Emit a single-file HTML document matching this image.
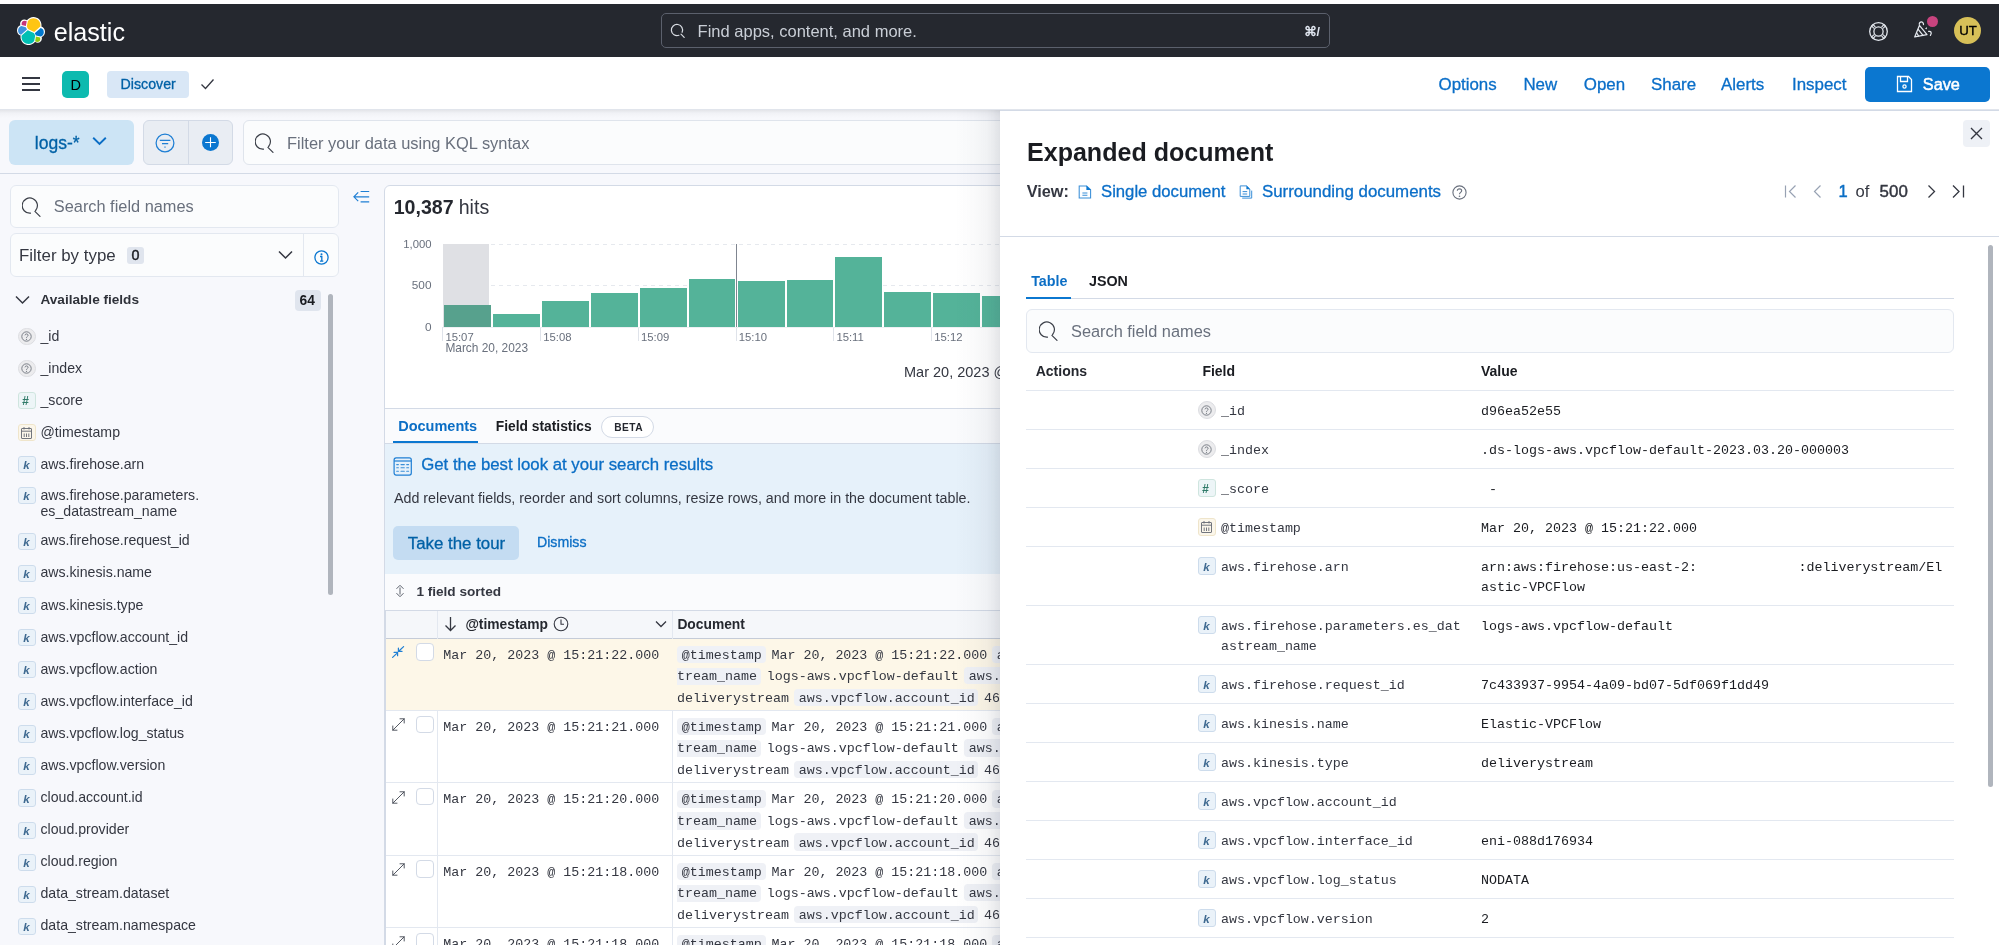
<!DOCTYPE html><html><head><meta charset="utf-8"><style>
*{box-sizing:border-box}
html,body{margin:0;padding:0}
body{width:1999px;height:945px;overflow:hidden;position:relative;background:#f7f8fc;font-family:"Liberation Sans", sans-serif;will-change:transform}
.t{position:absolute;line-height:1;white-space:nowrap;font-family:"Liberation Sans", sans-serif}
.t.m{font-family:"Liberation Mono", monospace}
.r{position:absolute}
.bl{display:inline-block;width:0;height:0;vertical-align:baseline}
</style></head><body>
<div class="r" style="left:0.00px;top:0.00px;width:1999.00px;height:4.00px;background:#fff"></div>
<div class="r" style="left:0.00px;top:4.00px;width:1999.00px;height:53.00px;background:#25282f"></div>
<svg class="r" style="left:17.30px;top:16.80px;" width="28" height="28" viewBox="0 0 32 32">
<path fill="#FFF" d="M32 16.842c0-2.677-1.663-5.029-4.164-5.939.109-.565.162-1.12.162-1.698C27.998 4.14 23.882.024 18.823.024c-2.962 0-5.72 1.414-7.442 3.803-.848-.658-1.891-1.018-2.973-1.018-2.685 0-4.874 2.18-4.874 4.874 0 .588.098 1.16.293 1.697C1.31 10.266 0 12.643 0 15.329c0 2.684 1.66 5.037 4.17 5.936a9.385 9.385 0 0 0-.164 1.698c0 5.055 4.107 9.170 9.162 9.170 2.970 0 5.720-1.420 7.434-3.810.857.670 1.900 1.037 2.970 1.037 2.686 0 4.873-2.180 4.873-4.874 0-.595-.097-1.168-.292-1.697 2.498-.910 3.847-3.287 3.847-5.947"/>
<path fill="#FEC514" d="M12.583 13.852l7.003 3.193 7.066-6.190a7.890 7.890 0 0 0 .153-1.555c0-4.364-3.550-7.914-7.914-7.914-2.611 0-5.046 1.287-6.526 3.447l-1.175 6.093 1.393 2.926z"/>
<path fill="#00BFB3" d="M5.336 21.264c-.101.508-.153 1.048-.153 1.575 0 4.378 3.562 7.940 7.940 7.940 2.633 0 5.082-1.300 6.557-3.480l1.166-6.075-1.556-2.975-7.030-3.204-6.924 6.219z"/>
<path fill="#C8357A" d="M5.290 9.218l4.799 1.133L11.140 4.900a3.646 3.646 0 0 0-2.200-.730 3.697 3.697 0 0 0-3.693 3.694c0 .480.093.944.245 1.354"/>
<path fill="#3E91DC" d="M4.874 10.361c-2.146.710-3.636 2.767-3.636 5.027 0 2.200 1.360 4.163 3.406 4.940l6.733-6.086-1.236-2.642-5.267-1.239z"/>
<path fill="#93C90E" d="M20.758 27.797a3.577 3.577 0 0 0 2.193.739 3.697 3.697 0 0 0 3.693-3.693c0-.480-.093-.946-.246-1.355l-4.796-1.123-.844 5.432z"/>
<path fill="#0077CC" d="M21.731 21.148l5.280 1.234c2.149-.708 3.637-2.758 3.637-5.026a5.205 5.205 0 0 0-3.500-4.924l-6.906 6.050 1.489 2.666z"/>
</svg>
<div id="t1" class="t" style="left:53.80px;top:19.61px;font-size:25.1px;color:#ffffff;">elastic</div>
<div class="r" style="left:661.00px;top:13.00px;width:669.00px;height:35.00px;border:1px solid #5b606c;border-radius:5px;background:#25282f"></div>
<svg class="r" style="left:669.50px;top:23.00px;" width="16" height="16" viewBox="0 0 16 16"><g fill="none" stroke="#d9dde3" stroke-width="1.2" stroke-linecap="round"><path d="M8.9 12.3 A5.6 5.6 0 1 1 12.1 9.3"/><path d="M11 11.2 L14.2 14.4"/></g></svg>
<div id="t2" class="t" style="left:697.60px;top:22.80px;font-size:16.5px;color:#c9ced6;">Find apps, content, and more.</div>
<div id="t3" class="t" style="left:1303.50px;top:26.01px;font-size:12.5px;color:#dfe5ef;font-weight:700;">&#8984;/</div>
<svg class="r" style="left:1868.00px;top:20.50px;" width="21" height="21" viewBox="0 0 21 21"><g fill="none" stroke="#e4e8ee" stroke-width="1.3"><circle cx="10.5" cy="10.5" r="8.8"/><circle cx="10.5" cy="10.5" r="4.6"/><path d="M4.6 3.2 L7.4 6 M3.2 4.6 L6 7.4 M16.4 3.2 L13.6 6 M17.8 4.6 L15 7.4 M4.6 17.8 L7.4 15 M3.2 16.4 L6 13.6 M16.4 17.8 L13.6 15 M17.8 16.4 L15 13.6" stroke-width="1.1"/></g></svg>
<svg class="r" style="left:1912.00px;top:20.00px;" width="22" height="22" viewBox="0 0 22 22"><g fill="none" stroke="#e4e8ee" stroke-width="1.25" stroke-linejoin="round" stroke-linecap="round"><path d="M2.7 16.9 L7.4 5.4 L15 14.6 Z"/><path d="M6.4 9.6 L11 15.4 M4.9 13.2 L6.6 16"/><path d="M7.3 4.3 C7.1 1.2 11.6 1.0 11.5 4.6"/><path d="M16.6 11.4 C18.8 10.8 20.2 12.6 18.4 15.4"/></g><path d="M13 8.8 L14.8 7 L14.9 9.2 Z" fill="#e4e8ee"/></svg>
<div class="r" style="left:1926.80px;top:16.20px;width:11.00px;height:11.00px;background:#c8447f;border-radius:50%"></div>
<div class="r" style="left:1954.00px;top:17.00px;width:27.30px;height:27.30px;background:#d7c058;border-radius:50%"></div>
<div id="t4" class="t" style="left:1959.20px;top:23.91px;font-size:13.2px;color:#000;-webkit-text-stroke:0.35px #000">UT</div>
<div class="r" style="left:0.00px;top:57.00px;width:1999.00px;height:53.00px;background:#fff;border-bottom:1px solid #e1e5ec"></div>
<div class="r" style="left:22.00px;top:76.80px;width:18.00px;height:2.40px;background:#343741"></div>
<div class="r" style="left:22.00px;top:82.80px;width:18.00px;height:2.40px;background:#343741"></div>
<div class="r" style="left:22.00px;top:88.80px;width:18.00px;height:2.40px;background:#343741"></div>
<div class="r" style="left:62.00px;top:71.00px;width:27.00px;height:27.00px;background:#0dbaaf;border-radius:5px"></div>
<div id="t5" class="t" style="left:70.60px;top:77.50px;font-size:14.5px;color:#000;">D</div>
<div class="r" style="left:107.00px;top:71.00px;width:82.00px;height:26.50px;background:#d9e7f6;border-radius:4px"></div>
<div id="t6" class="t" style="left:120.60px;top:76.91px;font-size:14.2px;color:#0061a6;-webkit-text-stroke:0.3px currentColor">Discover</div>
<svg class="r" style="left:200.00px;top:77.00px;" width="15" height="14" viewBox="0 0 15 14"><path d="M1.5 7.5 L5.5 11.5 L13.5 2.5" fill="none" stroke="#343741" stroke-width="1.3"/></svg>
<div id="t7" class="t" style="left:1438.50px;top:77.10px;font-size:16.9px;color:#0a6ec8;-webkit-text-stroke:0.3px currentColor">Options</div>
<div id="t8" class="t" style="left:1523.40px;top:77.10px;font-size:16.9px;color:#0a6ec8;-webkit-text-stroke:0.3px currentColor">New</div>
<div id="t9" class="t" style="left:1583.80px;top:77.10px;font-size:16.9px;color:#0a6ec8;-webkit-text-stroke:0.3px currentColor">Open</div>
<div id="t10" class="t" style="left:1651.00px;top:77.10px;font-size:16.9px;color:#0a6ec8;-webkit-text-stroke:0.3px currentColor">Share</div>
<div id="t11" class="t" style="left:1721.00px;top:77.10px;font-size:16.9px;color:#0a6ec8;-webkit-text-stroke:0.3px currentColor">Alerts</div>
<div id="t12" class="t" style="left:1792.00px;top:77.10px;font-size:16.9px;color:#0a6ec8;-webkit-text-stroke:0.3px currentColor">Inspect</div>
<div class="r" style="left:1865.00px;top:66.50px;width:125.00px;height:35.50px;background:#0b77d0;border-radius:5px"></div>
<svg class="r" style="left:1896.00px;top:75.00px;" width="17" height="18" viewBox="0 0 17 18"><g fill="none" stroke="#fff" stroke-width="1.3"><path d="M1.5 1.5 H12.5 L15.5 4.5 V16.5 H1.5 Z"/><path d="M4.5 1.5 V6.5 H11.5 V1.5"/><circle cx="8.5" cy="11.5" r="1.6"/></g></svg>
<div id="t13" class="t" style="left:1922.80px;top:76.30px;font-size:16.3px;color:#fff;-webkit-text-stroke:0.5px currentColor">Save</div>
<div class="r" style="left:0.00px;top:110.00px;width:1999.00px;height:64.00px;background:#f7f8fc;border-bottom:1px solid #d3dae6"></div>
<div class="r" style="left:0.00px;top:110.00px;width:1999.00px;height:8.00px;background:linear-gradient(180deg,rgba(52,55,65,0.10),rgba(52,55,65,0.03) 40%,rgba(52,55,65,0))"></div>
<div class="r" style="left:9.00px;top:120.00px;width:125.00px;height:44.50px;background:#cce4f5;border-radius:6px"></div>
<div id="t14" class="t" style="left:34.80px;top:134.51px;font-size:17.5px;color:#0061a6;-webkit-text-stroke:0.3px currentColor">logs-*</div>
<svg class="r" style="left:92.00px;top:136.00px;" width="15" height="10" viewBox="0 0 15 10"><path d="M1.2 1.8 L7.5 8 L13.8 1.8" fill="none" stroke="#0b6ec5" stroke-width="1.9"/></svg>
<div class="r" style="left:142.70px;top:120.30px;width:90.00px;height:44.30px;background:#e9edf3;border:1px solid #d3dae6;border-radius:6px"></div>
<div class="r" style="left:187.50px;top:121.00px;width:1.00px;height:43.00px;background:#d3dae6"></div>
<svg class="r" style="left:155.00px;top:132.70px;" width="20" height="20" viewBox="0 0 20 20"><g fill="none" stroke="#1f7fd4" stroke-width="1.25"><circle cx="10" cy="10" r="8.9"/><path d="M4.8 7.3 H15.4 M7 10.5 H13.2 M9.4 14 H10.6"/></g></svg>
<div class="r" style="left:201.80px;top:133.70px;width:17.00px;height:17.00px;background:#0b77d0;border-radius:50%"></div>
<svg class="r" style="left:201.80px;top:133.70px;" width="17" height="17" viewBox="0 0 17 17"><path d="M8.5 3.3 V13.3 M3.2 8.5 H13.8" stroke="#fff" stroke-width="1.1"/></svg>
<div class="r" style="left:242.50px;top:120.00px;width:1000.00px;height:44.50px;background:#fbfcfd;border:1px solid #dfe4ec;border-radius:6px"></div>
<svg class="r" style="left:255.20px;top:133.40px;" width="20" height="21" viewBox="0 0 20 21"><g fill="none" stroke="#3b3f48" stroke-width="1.2" stroke-linecap="round"><path d="M8.46 16.17 A7.6 7.6 0 1 1 13.62 13.49"/><path d="M12.9 14.3 L18 19.4"/></g></svg>
<div id="t15" class="t" style="left:287.00px;top:134.91px;font-size:16.45px;color:#69707d;">Filter your data using KQL syntax</div>
<div class="r" style="left:9.50px;top:185.00px;width:329.00px;height:43.00px;background:#fbfcfd;border:1px solid #e3e8f0;border-radius:6px"></div>
<svg class="r" style="left:22.00px;top:197.00px;" width="20" height="21" viewBox="0 0 20 21"><g fill="none" stroke="#3b3f48" stroke-width="1.2" stroke-linecap="round"><path d="M8.46 16.17 A7.6 7.6 0 1 1 13.62 13.49"/><path d="M12.9 14.3 L18 19.4"/></g></svg>
<div id="t16" class="t" style="left:53.80px;top:198.00px;font-size:16.35px;color:#69707d;">Search field names</div>
<div class="r" style="left:9.80px;top:233.40px;width:329.00px;height:43.60px;background:#fbfcfd;border:1px solid #e3e8f0;border-radius:6px"></div>
<div class="r" style="left:303.40px;top:234.00px;width:1.00px;height:42.50px;background:#e3e8f0"></div>
<div id="t17" class="t" style="left:19.00px;top:248.20px;font-size:16.9px;color:#343741;">Filter by type</div>
<div class="r" style="left:127.00px;top:246.70px;width:17.30px;height:17.70px;background:#e0e5ee;border-radius:3px"></div>
<div id="t18" class="t" style="left:131.40px;top:247.90px;font-size:14.3px;color:#1a1c21;-webkit-text-stroke:0.45px currentColor">0</div>
<svg class="r" style="left:278.00px;top:250.00px;" width="15" height="10" viewBox="0 0 15 10"><path d="M1 1.5 L7.5 8 L14 1.5" fill="none" stroke="#343741" stroke-width="1.5"/></svg>
<svg class="r" style="left:313.50px;top:249.50px;" width="15" height="15" viewBox="0 0 15 15"><circle cx="7.5" cy="7.5" r="6.6" fill="none" stroke="#0b77d0" stroke-width="1.3"/><circle cx="7.5" cy="4.3" r="1" fill="#0b77d0"/><path d="M6 6.5 H7.8 V11 M6 11.2 H9.3" fill="none" stroke="#0b77d0" stroke-width="1.3"/></svg>
<svg class="r" style="left:15.00px;top:295.00px;" width="15" height="10" viewBox="0 0 15 10"><path d="M1 1.5 L7.5 8 L14 1.5" fill="none" stroke="#343741" stroke-width="1.5"/></svg>
<div id="t19" class="t" style="left:40.50px;top:293.31px;font-size:13.6px;color:#2f323a;font-weight:700;">Available fields</div>
<div class="r" style="left:295.00px;top:289.50px;width:26.00px;height:21.20px;background:#e0e5ee;border-radius:4px"></div>
<div id="t20" class="t" style="left:299.50px;top:294.00px;font-size:13.8px;color:#1a1c21;font-weight:700;">64</div>
<div class="r" style="left:328.00px;top:293.50px;width:4.50px;height:301.00px;background:#b0b5bd;border-radius:3px"></div>
<div class="r" style="left:18.00px;top:327.80px;width:17.50px;height:17.50px;background:#ececee;border:1px solid #dcdde1;border-radius:50%"></div>
<svg class="r" style="left:21.30px;top:331.10px;" width="11" height="11" viewBox="0 0 11 11"><circle cx="5.5" cy="5.5" r="4.7" fill="none" stroke="#6e747d" stroke-width="0.9"/><path d="M4 4.3 C4 2.5 7.1 2.5 7.1 4.3 C7.1 5.4 5.5 5.4 5.5 6.8" fill="none" stroke="#6e747d" stroke-width="0.9"/><circle cx="5.5" cy="8.3" r="0.6" fill="#6e747d"/></svg>
<div id="t21" class="t" style="left:40.50px;top:328.60px;font-size:14.13px;color:#343741;">_id</div>
<div class="r" style="left:18.00px;top:359.80px;width:17.50px;height:17.50px;background:#ececee;border:1px solid #dcdde1;border-radius:50%"></div>
<svg class="r" style="left:21.30px;top:363.10px;" width="11" height="11" viewBox="0 0 11 11"><circle cx="5.5" cy="5.5" r="4.7" fill="none" stroke="#6e747d" stroke-width="0.9"/><path d="M4 4.3 C4 2.5 7.1 2.5 7.1 4.3 C7.1 5.4 5.5 5.4 5.5 6.8" fill="none" stroke="#6e747d" stroke-width="0.9"/><circle cx="5.5" cy="8.3" r="0.6" fill="#6e747d"/></svg>
<div id="t22" class="t" style="left:40.50px;top:360.60px;font-size:14.13px;color:#343741;">_index</div>
<div class="r" style="left:18.00px;top:391.80px;width:17.50px;height:17.50px;background:#edf5f7;border:1px solid #cfe5df;border-radius:3px"></div>
<div id="t23" class="t" style="left:22.00px;top:395.01px;font-size:12px;color:#2f7a68;font-weight:700;font-style:italic">#</div>
<div id="t24" class="t" style="left:40.50px;top:392.60px;font-size:14.13px;color:#343741;">_score</div>
<div class="r" style="left:18.00px;top:423.80px;width:17.50px;height:17.50px;background:#fbf6ea;border:1px solid #efe5cb;border-radius:3px"></div>
<svg class="r" style="left:21.30px;top:426.60px;" width="11" height="12" viewBox="0 0 11 12"><g fill="none" stroke="#6a6f78" stroke-width="0.95"><rect x="0.5" y="1.5" width="10" height="10" rx="0.5"/><path d="M0.5 4.2 H10.5 M3 0 V2.5 M8 0 V2.5 M3.2 6.5 V10 M5.5 6.5 V10 M7.8 6.5 V10"/></g></svg>
<div id="t25" class="t" style="left:40.50px;top:424.60px;font-size:14.13px;color:#343741;">@timestamp</div>
<div class="r" style="left:18.00px;top:455.80px;width:17.50px;height:17.50px;background:#eaf2f9;border:1px solid #cddcec;border-radius:3px"></div>
<div id="t26" class="t" style="left:23.30px;top:460.01px;font-size:11.5px;color:#3f6a91;font-weight:700;font-style:italic">k</div>
<div id="t27" class="t" style="left:40.50px;top:456.60px;font-size:14.13px;color:#343741;">aws.firehose.arn</div>
<div class="r" style="left:18.00px;top:486.80px;width:17.50px;height:17.50px;background:#eaf2f9;border:1px solid #cddcec;border-radius:3px"></div>
<div id="t28" class="t" style="left:23.30px;top:491.01px;font-size:11.5px;color:#3f6a91;font-weight:700;font-style:italic">k</div>
<div id="t29" class="t" style="left:40.50px;top:487.60px;font-size:14.13px;color:#343741;">aws.firehose.parameters.</div>
<div class="r" style="left:18.00px;top:532.60px;width:17.50px;height:17.50px;background:#eaf2f9;border:1px solid #cddcec;border-radius:3px"></div>
<div id="t30" class="t" style="left:23.30px;top:536.80px;font-size:11.5px;color:#3f6a91;font-weight:700;font-style:italic">k</div>
<div id="t31" class="t" style="left:40.50px;top:533.41px;font-size:14.13px;color:#343741;">aws.firehose.request_id</div>
<div class="r" style="left:18.00px;top:564.50px;width:17.50px;height:17.50px;background:#eaf2f9;border:1px solid #cddcec;border-radius:3px"></div>
<div id="t32" class="t" style="left:23.30px;top:568.71px;font-size:11.5px;color:#3f6a91;font-weight:700;font-style:italic">k</div>
<div id="t33" class="t" style="left:40.50px;top:565.31px;font-size:14.13px;color:#343741;">aws.kinesis.name</div>
<div class="r" style="left:18.00px;top:596.70px;width:17.50px;height:17.50px;background:#eaf2f9;border:1px solid #cddcec;border-radius:3px"></div>
<div id="t34" class="t" style="left:23.30px;top:600.90px;font-size:11.5px;color:#3f6a91;font-weight:700;font-style:italic">k</div>
<div id="t35" class="t" style="left:40.50px;top:597.50px;font-size:14.13px;color:#343741;">aws.kinesis.type</div>
<div class="r" style="left:18.00px;top:628.70px;width:17.50px;height:17.50px;background:#eaf2f9;border:1px solid #cddcec;border-radius:3px"></div>
<div id="t36" class="t" style="left:23.30px;top:632.90px;font-size:11.5px;color:#3f6a91;font-weight:700;font-style:italic">k</div>
<div id="t37" class="t" style="left:40.50px;top:629.50px;font-size:14.13px;color:#343741;">aws.vpcflow.account_id</div>
<div class="r" style="left:18.00px;top:660.80px;width:17.50px;height:17.50px;background:#eaf2f9;border:1px solid #cddcec;border-radius:3px"></div>
<div id="t38" class="t" style="left:23.30px;top:665.01px;font-size:11.5px;color:#3f6a91;font-weight:700;font-style:italic">k</div>
<div id="t39" class="t" style="left:40.50px;top:661.60px;font-size:14.13px;color:#343741;">aws.vpcflow.action</div>
<div class="r" style="left:18.00px;top:692.80px;width:17.50px;height:17.50px;background:#eaf2f9;border:1px solid #cddcec;border-radius:3px"></div>
<div id="t40" class="t" style="left:23.30px;top:697.01px;font-size:11.5px;color:#3f6a91;font-weight:700;font-style:italic">k</div>
<div id="t41" class="t" style="left:40.50px;top:693.60px;font-size:14.13px;color:#343741;">aws.vpcflow.interface_id</div>
<div class="r" style="left:18.00px;top:725.00px;width:17.50px;height:17.50px;background:#eaf2f9;border:1px solid #cddcec;border-radius:3px"></div>
<div id="t42" class="t" style="left:23.30px;top:729.21px;font-size:11.5px;color:#3f6a91;font-weight:700;font-style:italic">k</div>
<div id="t43" class="t" style="left:40.50px;top:725.81px;font-size:14.13px;color:#343741;">aws.vpcflow.log_status</div>
<div class="r" style="left:18.00px;top:757.20px;width:17.50px;height:17.50px;background:#eaf2f9;border:1px solid #cddcec;border-radius:3px"></div>
<div id="t44" class="t" style="left:23.30px;top:761.40px;font-size:11.5px;color:#3f6a91;font-weight:700;font-style:italic">k</div>
<div id="t45" class="t" style="left:40.50px;top:758.00px;font-size:14.13px;color:#343741;">aws.vpcflow.version</div>
<div class="r" style="left:18.00px;top:789.40px;width:17.50px;height:17.50px;background:#eaf2f9;border:1px solid #cddcec;border-radius:3px"></div>
<div id="t46" class="t" style="left:23.30px;top:793.61px;font-size:11.5px;color:#3f6a91;font-weight:700;font-style:italic">k</div>
<div id="t47" class="t" style="left:40.50px;top:790.21px;font-size:14.13px;color:#343741;">cloud.account.id</div>
<div class="r" style="left:18.00px;top:821.50px;width:17.50px;height:17.50px;background:#eaf2f9;border:1px solid #cddcec;border-radius:3px"></div>
<div id="t48" class="t" style="left:23.30px;top:825.71px;font-size:11.5px;color:#3f6a91;font-weight:700;font-style:italic">k</div>
<div id="t49" class="t" style="left:40.50px;top:822.31px;font-size:14.13px;color:#343741;">cloud.provider</div>
<div class="r" style="left:18.00px;top:853.60px;width:17.50px;height:17.50px;background:#eaf2f9;border:1px solid #cddcec;border-radius:3px"></div>
<div id="t50" class="t" style="left:23.30px;top:857.80px;font-size:11.5px;color:#3f6a91;font-weight:700;font-style:italic">k</div>
<div id="t51" class="t" style="left:40.50px;top:854.41px;font-size:14.13px;color:#343741;">cloud.region</div>
<div class="r" style="left:18.00px;top:885.60px;width:17.50px;height:17.50px;background:#eaf2f9;border:1px solid #cddcec;border-radius:3px"></div>
<div id="t52" class="t" style="left:23.30px;top:889.80px;font-size:11.5px;color:#3f6a91;font-weight:700;font-style:italic">k</div>
<div id="t53" class="t" style="left:40.50px;top:886.41px;font-size:14.13px;color:#343741;">data_stream.dataset</div>
<div class="r" style="left:18.00px;top:917.60px;width:17.50px;height:17.50px;background:#eaf2f9;border:1px solid #cddcec;border-radius:3px"></div>
<div id="t54" class="t" style="left:23.30px;top:921.80px;font-size:11.5px;color:#3f6a91;font-weight:700;font-style:italic">k</div>
<div id="t55" class="t" style="left:40.50px;top:918.41px;font-size:14.13px;color:#343741;">data_stream.namespace</div>
<div id="t56" class="t" style="left:40.50px;top:503.50px;font-size:14.13px;color:#343741;">es_datastream_name</div>
<svg class="r" style="left:352.00px;top:189.00px;" width="18" height="15" viewBox="0 0 18 15"><g fill="none" stroke="#1f7fd4" stroke-width="1.15"><path d="M6.2 3.4 L1.9 7.8 L6.2 12.2 M1.9 7.8 H17.2 M8.6 2.5 H17.2 M8.6 12.8 H17.2"/></g></svg>
<div class="r" style="left:384.40px;top:184.50px;width:700.00px;height:800.00px;background:#fff;border:1px solid #d3dae6;border-radius:6px"></div>
<div id="t57" class="t" style="left:393.70px;top:197.80px;font-size:19.6px;color:#25282f;font-weight:700;">10,387</div>
<div id="t58" class="t" style="left:458.70px;top:197.80px;font-size:19.6px;color:#343741;">hits</div>
<div id="t59" class="t" style="left:403.23px;top:238.61px;font-size:11.3px;color:#69707d;">1,000</div>
<div id="t60" class="t" style="left:411.81px;top:279.91px;font-size:11.8px;color:#69707d;">500</div>
<div id="t61" class="t" style="left:424.94px;top:321.70px;font-size:11.8px;color:#69707d;">0</div>
<div class="r" style="left:442.70px;top:244.00px;width:560.00px;height:1.00px;background-image:linear-gradient(90deg,#e6e9ee 50%,transparent 50%);background-size:8px 1px"></div>
<div class="r" style="left:442.70px;top:285.00px;width:560.00px;height:1.00px;background-image:linear-gradient(90deg,#e6e9ee 50%,transparent 50%);background-size:8px 1px"></div>
<div class="r" style="left:442.70px;top:244.30px;width:46.50px;height:83.00px;background:#dfe0e4"></div>
<div class="r" style="left:444.00px;top:305.40px;width:46.60px;height:22.00px;background:#57a18d"></div>
<div class="r" style="left:493.30px;top:314.00px;width:46.60px;height:13.40px;background:#54b399"></div>
<div class="r" style="left:542.00px;top:300.60px;width:46.60px;height:26.80px;background:#54b399"></div>
<div class="r" style="left:591.00px;top:292.60px;width:46.60px;height:34.80px;background:#54b399"></div>
<div class="r" style="left:640.00px;top:287.50px;width:46.60px;height:39.90px;background:#54b399"></div>
<div class="r" style="left:688.60px;top:278.90px;width:46.60px;height:48.50px;background:#54b399"></div>
<div class="r" style="left:738.00px;top:281.40px;width:46.60px;height:46.00px;background:#54b399"></div>
<div class="r" style="left:786.60px;top:280.10px;width:46.60px;height:47.30px;background:#54b399"></div>
<div class="r" style="left:835.00px;top:256.50px;width:46.60px;height:70.90px;background:#54b399"></div>
<div class="r" style="left:884.00px;top:291.70px;width:46.60px;height:35.70px;background:#54b399"></div>
<div class="r" style="left:933.00px;top:293.00px;width:46.60px;height:34.40px;background:#54b399"></div>
<div class="r" style="left:982.00px;top:295.50px;width:46.60px;height:31.90px;background:#54b399"></div>
<div class="r" style="left:442.20px;top:327.40px;width:1.00px;height:14.00px;background:#dfe3ea"></div>
<div id="t62" class="t" style="left:445.40px;top:331.61px;font-size:11.3px;color:#69707d;">15:07</div>
<div class="r" style="left:540.00px;top:327.40px;width:1.00px;height:14.00px;background:#dfe3ea"></div>
<div id="t63" class="t" style="left:543.20px;top:331.61px;font-size:11.3px;color:#69707d;">15:08</div>
<div class="r" style="left:637.80px;top:327.40px;width:1.00px;height:14.00px;background:#dfe3ea"></div>
<div id="t64" class="t" style="left:641.00px;top:331.61px;font-size:11.3px;color:#69707d;">15:09</div>
<div class="r" style="left:735.50px;top:327.40px;width:1.00px;height:14.00px;background:#dfe3ea"></div>
<div id="t65" class="t" style="left:738.70px;top:331.61px;font-size:11.3px;color:#69707d;">15:10</div>
<div class="r" style="left:833.20px;top:327.40px;width:1.00px;height:14.00px;background:#dfe3ea"></div>
<div id="t66" class="t" style="left:836.40px;top:331.61px;font-size:11.3px;color:#69707d;">15:11</div>
<div class="r" style="left:931.10px;top:327.40px;width:1.00px;height:14.00px;background:#dfe3ea"></div>
<div id="t67" class="t" style="left:934.30px;top:331.61px;font-size:11.3px;color:#69707d;">15:12</div>
<div class="r" style="left:736.00px;top:244.00px;width:1.00px;height:84.00px;background:#7f8590"></div>
<div id="t68" class="t" style="left:445.40px;top:342.60px;font-size:11.9px;color:#69707d;">March 20, 2023</div>
<div class="r" style="left:442.70px;top:327.00px;width:560.00px;height:1.00px;background:#eef0f3"></div>
<div id="t69" class="t" style="left:904.00px;top:364.50px;font-size:14.5px;color:#343741;">Mar 20, 2023 @ 15:07:00.000 - Mar 20, 2023 @ 15:22:00.000</div>
<div class="r" style="left:385.00px;top:408.00px;width:620.00px;height:1.00px;background:#d3dae6"></div>
<div class="r" style="left:385.00px;top:409.00px;width:620.00px;height:34.00px;background:#fafbfd"></div>
<div id="t70" class="t" style="left:398.20px;top:419.41px;font-size:14.5px;color:#0b6ec5;font-weight:700;">Documents</div>
<div class="r" style="left:393.40px;top:441.00px;width:84.60px;height:2.00px;background:#0b77d0"></div>
<div id="t71" class="t" style="left:495.80px;top:420.41px;font-size:13.8px;color:#1a1c21;font-weight:700;">Field statistics</div>
<div class="r" style="left:601.00px;top:416.00px;width:53.00px;height:21.50px;border:1px solid #d3dae6;border-radius:11px;background:#fff"></div>
<div id="t72" class="t" style="left:614.20px;top:422.81px;font-size:10.2px;color:#25282f;font-weight:700;letter-spacing:0.5px">BETA</div>
<div class="r" style="left:385.00px;top:443.00px;width:620.00px;height:1.00px;background:#d3dae6"></div>
<div class="r" style="left:385.00px;top:444.00px;width:620.00px;height:130.00px;background:#e6f1fa"></div>
<svg class="r" style="left:393.00px;top:456.50px;" width="19" height="19" viewBox="0 0 19 19"><g fill="none" stroke="#1f7fd4" stroke-width="1.2"><rect x="1.1" y="0.9" width="17.2" height="17.2" rx="2"/><path d="M1.1 4 H18.3"/></g><g stroke="#3a8fd8" stroke-width="1.1" stroke-linecap="round"><path d="M3.7 7.6 H5.4 M8 7.6 H11.3 M13.7 7.6 H15.6 M3.7 10.8 H5.4 M8 10.8 H11.3 M13.7 10.8 H15.6 M3.7 14.3 H5.4 M8 14.3 H11.3 M13.7 14.3 H15.6"/></g></svg>
<div id="t73" class="t" style="left:421.20px;top:457.41px;font-size:16.8px;color:#0b6ec5;-webkit-text-stroke:0.3px currentColor">Get the best look at your search results</div>
<div id="t74" class="t" style="left:394.00px;top:491.11px;font-size:14.27px;color:#343741;">Add relevant fields, reorder and sort columns, resize rows, and more in the document table.</div>
<div class="r" style="left:393.40px;top:525.50px;width:125.50px;height:34.50px;background:#c4dcf2;border-radius:5px"></div>
<div id="t75" class="t" style="left:407.80px;top:535.90px;font-size:16.85px;color:#0061a6;-webkit-text-stroke:0.3px currentColor">Take the tour</div>
<div id="t76" class="t" style="left:537.00px;top:535.31px;font-size:14.15px;color:#0b6ec5;-webkit-text-stroke:0.3px currentColor">Dismiss</div>
<div class="r" style="left:385.00px;top:574.00px;width:620.00px;height:36.00px;background:#fafbfd"></div>
<svg class="r" style="left:395.00px;top:584.00px;" width="10" height="14" viewBox="0 0 10 14"><g fill="none" stroke="#5a606b" stroke-width="1.0"><path d="M1.5 4.8 L5 1.3 L8.5 4.8 M1.5 9.2 L5 12.7 L8.5 9.2 M5 3.5 V10.5"/></g></svg>
<div id="t77" class="t" style="left:416.40px;top:585.00px;font-size:13.6px;color:#343741;font-weight:700;">1 field sorted</div>
<div class="r" style="left:385.00px;top:610.00px;width:620.00px;height:1.00px;background:#d3dae6"></div>
<div class="r" style="left:385.00px;top:611.00px;width:620.00px;height:27.00px;background:#f5f7fa"></div>
<div class="r" style="left:385.00px;top:638.00px;width:620.00px;height:1.00px;background:#c5ccd8"></div>
<div class="r" style="left:437.00px;top:611.00px;width:1.00px;height:340.00px;background:#e3e8f0"></div>
<div class="r" style="left:672.00px;top:611.00px;width:1.00px;height:340.00px;background:#e3e8f0"></div>
<svg class="r" style="left:444.00px;top:616.00px;" width="13" height="16" viewBox="0 0 13 16"><path d="M6.5 1 V14.5 M1.5 9.5 L6.5 14.5 L11.5 9.5" fill="none" stroke="#343741" stroke-width="1.3"/></svg>
<div id="t78" class="t" style="left:465.40px;top:618.00px;font-size:13.8px;color:#25282f;font-weight:700;">@timestamp</div>
<svg class="r" style="left:552.50px;top:615.50px;" width="16" height="16" viewBox="0 0 16 16"><g fill="none" stroke="#343741" stroke-width="1.1"><circle cx="8" cy="8" r="6.8"/><path d="M8 3.5 V8.3 H11"/></g></svg>
<svg class="r" style="left:655.00px;top:620.00px;" width="12" height="9" viewBox="0 0 12 9"><path d="M1 1.5 L6 6.5 L11 1.5" fill="none" stroke="#343741" stroke-width="1.3"/></svg>
<div id="t79" class="t" style="left:677.40px;top:618.00px;font-size:13.8px;color:#25282f;font-weight:700;">Document</div>
<div class="r" style="left:385.00px;top:638.50px;width:620.00px;height:71.50px;background:#fdf7e8"></div>
<div class="r" style="left:385.00px;top:710.00px;width:620.00px;height:1.00px;background:#e3e8f0"></div>
<svg class="r" style="left:392.00px;top:646.00px;" width="13" height="13" viewBox="0 0 13 13"><g fill="none" stroke="#1f7fd4" stroke-width="1.2" stroke-linecap="round"><path d="M11.6 0.6 L7.2 4.8 M6.4 2.1 V5.4 H10 M0.6 11.4 L4.6 7.6 M2.1 6.4 H5.6 V9.7"/></g></svg>
<div class="r" style="left:416.20px;top:643.20px;width:17.50px;height:17.50px;background:#fff;border:1px solid #d3dae6;border-radius:4px"></div>
<div id="t80" class="t m" style="left:443.30px;top:648.72px;font-size:13.33px;color:#343741;">Mar 20, 2023 @ 15:21:22.000</div>
<div class="r" style="left:676.90px;top:645.60px;width:88.70px;height:17.40px;background:#eff1f6;border-radius:4px"></div>
<div id="t81" class="t m" style="left:681.80px;top:648.72px;font-size:13.33px;color:#343741;">@timestamp</div>
<div id="t82" class="t m" style="left:771.40px;top:648.72px;font-size:13.33px;color:#343741;">Mar 20, 2023 @ 15:21:22.000</div>
<div class="r" style="left:991.90px;top:645.60px;width:136.70px;height:17.40px;background:#eff1f6;border-radius:4px"></div>
<div id="t83" class="t m" style="left:996.80px;top:648.72px;font-size:13.33px;color:#343741;">aws.firehose.arn</div>
<div class="r" style="left:676.90px;top:667.70px;width:84.60px;height:17.40px;background:#eff1f6;border-radius:0 4px 4px 0"></div>
<div id="t84" class="t m" style="left:677.10px;top:670.10px;font-size:13.33px;color:#343741;">tream_name</div>
<div id="t85" class="t m" style="left:766.80px;top:670.10px;font-size:13.33px;color:#343741;">logs-aws.vpcflow-default</div>
<div class="r" style="left:963.90px;top:667.00px;width:136.70px;height:17.40px;background:#eff1f6;border-radius:4px"></div>
<div id="t86" class="t m" style="left:968.80px;top:670.10px;font-size:13.33px;color:#343741;">aws.kinesis.name</div>
<div id="t87" class="t m" style="left:677.10px;top:691.81px;font-size:13.33px;color:#343741;">deliverystream</div>
<div class="r" style="left:793.80px;top:688.70px;width:184.70px;height:17.40px;background:#eff1f6;border-radius:4px"></div>
<div id="t88" class="t m" style="left:798.70px;top:691.81px;font-size:13.33px;color:#343741;">aws.vpcflow.account_id</div>
<div id="t89" class="t m" style="left:984.00px;top:691.81px;font-size:13.33px;color:#343741;">46</div>
<div class="r" style="left:385.00px;top:782.30px;width:620.00px;height:1.00px;background:#e3e8f0"></div>
<svg class="r" style="left:392.00px;top:718.30px;" width="13" height="13" viewBox="0 0 13 13"><g fill="none" stroke="#4a4f5a" stroke-width="0.95" stroke-linecap="round"><path d="M0.8 12.2 L12.2 0.8 M0.8 8 V12.2 H5 M8 0.8 H12.2 V5"/></g></svg>
<div class="r" style="left:416.20px;top:715.50px;width:17.50px;height:17.50px;background:#fff;border:1px solid #d3dae6;border-radius:4px"></div>
<div id="t90" class="t m" style="left:443.30px;top:721.01px;font-size:13.33px;color:#343741;">Mar 20, 2023 @ 15:21:21.000</div>
<div class="r" style="left:676.90px;top:717.90px;width:88.70px;height:17.40px;background:#eff1f6;border-radius:4px"></div>
<div id="t91" class="t m" style="left:681.80px;top:721.01px;font-size:13.33px;color:#343741;">@timestamp</div>
<div id="t92" class="t m" style="left:771.40px;top:721.01px;font-size:13.33px;color:#343741;">Mar 20, 2023 @ 15:21:21.000</div>
<div class="r" style="left:991.90px;top:717.90px;width:136.70px;height:17.40px;background:#eff1f6;border-radius:4px"></div>
<div id="t93" class="t m" style="left:996.80px;top:721.01px;font-size:13.33px;color:#343741;">aws.firehose.arn</div>
<div class="r" style="left:676.90px;top:740.00px;width:84.60px;height:17.40px;background:#eff1f6;border-radius:0 4px 4px 0"></div>
<div id="t94" class="t m" style="left:677.10px;top:742.41px;font-size:13.33px;color:#343741;">tream_name</div>
<div id="t95" class="t m" style="left:766.80px;top:742.41px;font-size:13.33px;color:#343741;">logs-aws.vpcflow-default</div>
<div class="r" style="left:963.90px;top:739.30px;width:136.70px;height:17.40px;background:#eff1f6;border-radius:4px"></div>
<div id="t96" class="t m" style="left:968.80px;top:742.41px;font-size:13.33px;color:#343741;">aws.kinesis.name</div>
<div id="t97" class="t m" style="left:677.10px;top:764.10px;font-size:13.33px;color:#343741;">deliverystream</div>
<div class="r" style="left:793.80px;top:761.00px;width:184.70px;height:17.40px;background:#eff1f6;border-radius:4px"></div>
<div id="t98" class="t m" style="left:798.70px;top:764.10px;font-size:13.33px;color:#343741;">aws.vpcflow.account_id</div>
<div id="t99" class="t m" style="left:984.00px;top:764.10px;font-size:13.33px;color:#343741;">46</div>
<div class="r" style="left:385.00px;top:854.70px;width:620.00px;height:1.00px;background:#e3e8f0"></div>
<svg class="r" style="left:392.00px;top:790.70px;" width="13" height="13" viewBox="0 0 13 13"><g fill="none" stroke="#4a4f5a" stroke-width="0.95" stroke-linecap="round"><path d="M0.8 12.2 L12.2 0.8 M0.8 8 V12.2 H5 M8 0.8 H12.2 V5"/></g></svg>
<div class="r" style="left:416.20px;top:787.90px;width:17.50px;height:17.50px;background:#fff;border:1px solid #d3dae6;border-radius:4px"></div>
<div id="t100" class="t m" style="left:443.30px;top:793.41px;font-size:13.33px;color:#343741;">Mar 20, 2023 @ 15:21:20.000</div>
<div class="r" style="left:676.90px;top:790.30px;width:88.70px;height:17.40px;background:#eff1f6;border-radius:4px"></div>
<div id="t101" class="t m" style="left:681.80px;top:793.41px;font-size:13.33px;color:#343741;">@timestamp</div>
<div id="t102" class="t m" style="left:771.40px;top:793.41px;font-size:13.33px;color:#343741;">Mar 20, 2023 @ 15:21:20.000</div>
<div class="r" style="left:991.90px;top:790.30px;width:136.70px;height:17.40px;background:#eff1f6;border-radius:4px"></div>
<div id="t103" class="t m" style="left:996.80px;top:793.41px;font-size:13.33px;color:#343741;">aws.firehose.arn</div>
<div class="r" style="left:676.90px;top:812.40px;width:84.60px;height:17.40px;background:#eff1f6;border-radius:0 4px 4px 0"></div>
<div id="t104" class="t m" style="left:677.10px;top:814.81px;font-size:13.33px;color:#343741;">tream_name</div>
<div id="t105" class="t m" style="left:766.80px;top:814.81px;font-size:13.33px;color:#343741;">logs-aws.vpcflow-default</div>
<div class="r" style="left:963.90px;top:811.70px;width:136.70px;height:17.40px;background:#eff1f6;border-radius:4px"></div>
<div id="t106" class="t m" style="left:968.80px;top:814.81px;font-size:13.33px;color:#343741;">aws.kinesis.name</div>
<div id="t107" class="t m" style="left:677.10px;top:836.51px;font-size:13.33px;color:#343741;">deliverystream</div>
<div class="r" style="left:793.80px;top:833.40px;width:184.70px;height:17.40px;background:#eff1f6;border-radius:4px"></div>
<div id="t108" class="t m" style="left:798.70px;top:836.51px;font-size:13.33px;color:#343741;">aws.vpcflow.account_id</div>
<div id="t109" class="t m" style="left:984.00px;top:836.51px;font-size:13.33px;color:#343741;">46</div>
<div class="r" style="left:385.00px;top:927.10px;width:620.00px;height:1.00px;background:#e3e8f0"></div>
<svg class="r" style="left:392.00px;top:863.10px;" width="13" height="13" viewBox="0 0 13 13"><g fill="none" stroke="#4a4f5a" stroke-width="0.95" stroke-linecap="round"><path d="M0.8 12.2 L12.2 0.8 M0.8 8 V12.2 H5 M8 0.8 H12.2 V5"/></g></svg>
<div class="r" style="left:416.20px;top:860.30px;width:17.50px;height:17.50px;background:#fff;border:1px solid #d3dae6;border-radius:4px"></div>
<div id="t110" class="t m" style="left:443.30px;top:865.81px;font-size:13.33px;color:#343741;">Mar 20, 2023 @ 15:21:18.000</div>
<div class="r" style="left:676.90px;top:862.70px;width:88.70px;height:17.40px;background:#eff1f6;border-radius:4px"></div>
<div id="t111" class="t m" style="left:681.80px;top:865.81px;font-size:13.33px;color:#343741;">@timestamp</div>
<div id="t112" class="t m" style="left:771.40px;top:865.81px;font-size:13.33px;color:#343741;">Mar 20, 2023 @ 15:21:18.000</div>
<div class="r" style="left:991.90px;top:862.70px;width:136.70px;height:17.40px;background:#eff1f6;border-radius:4px"></div>
<div id="t113" class="t m" style="left:996.80px;top:865.81px;font-size:13.33px;color:#343741;">aws.firehose.arn</div>
<div class="r" style="left:676.90px;top:884.80px;width:84.60px;height:17.40px;background:#eff1f6;border-radius:0 4px 4px 0"></div>
<div id="t114" class="t m" style="left:677.10px;top:887.22px;font-size:13.33px;color:#343741;">tream_name</div>
<div id="t115" class="t m" style="left:766.80px;top:887.22px;font-size:13.33px;color:#343741;">logs-aws.vpcflow-default</div>
<div class="r" style="left:963.90px;top:884.10px;width:136.70px;height:17.40px;background:#eff1f6;border-radius:4px"></div>
<div id="t116" class="t m" style="left:968.80px;top:887.22px;font-size:13.33px;color:#343741;">aws.kinesis.name</div>
<div id="t117" class="t m" style="left:677.10px;top:908.91px;font-size:13.33px;color:#343741;">deliverystream</div>
<div class="r" style="left:793.80px;top:905.80px;width:184.70px;height:17.40px;background:#eff1f6;border-radius:4px"></div>
<div id="t118" class="t m" style="left:798.70px;top:908.91px;font-size:13.33px;color:#343741;">aws.vpcflow.account_id</div>
<div id="t119" class="t m" style="left:984.00px;top:908.91px;font-size:13.33px;color:#343741;">46</div>
<div class="r" style="left:385.00px;top:999.50px;width:620.00px;height:1.00px;background:#e3e8f0"></div>
<svg class="r" style="left:392.00px;top:935.50px;" width="13" height="13" viewBox="0 0 13 13"><g fill="none" stroke="#4a4f5a" stroke-width="0.95" stroke-linecap="round"><path d="M0.8 12.2 L12.2 0.8 M0.8 8 V12.2 H5 M8 0.8 H12.2 V5"/></g></svg>
<div class="r" style="left:416.20px;top:932.70px;width:17.50px;height:17.50px;background:#fff;border:1px solid #d3dae6;border-radius:4px"></div>
<div id="t120" class="t m" style="left:443.30px;top:938.22px;font-size:13.33px;color:#343741;">Mar 20, 2023 @ 15:21:18.000</div>
<div class="r" style="left:676.90px;top:935.10px;width:88.70px;height:17.40px;background:#eff1f6;border-radius:4px"></div>
<div id="t121" class="t m" style="left:681.80px;top:938.22px;font-size:13.33px;color:#343741;">@timestamp</div>
<div id="t122" class="t m" style="left:771.40px;top:938.22px;font-size:13.33px;color:#343741;">Mar 20, 2023 @ 15:21:18.000</div>
<div class="r" style="left:991.90px;top:935.10px;width:136.70px;height:17.40px;background:#eff1f6;border-radius:4px"></div>
<div id="t123" class="t m" style="left:996.80px;top:938.22px;font-size:13.33px;color:#343741;">aws.firehose.arn</div>
<div class="r" style="left:676.90px;top:957.20px;width:84.60px;height:17.40px;background:#eff1f6;border-radius:0 4px 4px 0"></div>
<div id="t124" class="t m" style="left:677.10px;top:959.60px;font-size:13.33px;color:#343741;">tream_name</div>
<div id="t125" class="t m" style="left:766.80px;top:959.60px;font-size:13.33px;color:#343741;">logs-aws.vpcflow-default</div>
<div class="r" style="left:963.90px;top:956.50px;width:136.70px;height:17.40px;background:#eff1f6;border-radius:4px"></div>
<div id="t126" class="t m" style="left:968.80px;top:959.60px;font-size:13.33px;color:#343741;">aws.kinesis.name</div>
<div id="t127" class="t m" style="left:677.10px;top:981.31px;font-size:13.33px;color:#343741;">deliverystream</div>
<div class="r" style="left:793.80px;top:978.20px;width:184.70px;height:17.40px;background:#eff1f6;border-radius:4px"></div>
<div id="t128" class="t m" style="left:798.70px;top:981.31px;font-size:13.33px;color:#343741;">aws.vpcflow.account_id</div>
<div id="t129" class="t m" style="left:984.00px;top:981.31px;font-size:13.33px;color:#343741;">46</div>
<div class="r" style="left:384.40px;top:611.00px;width:1.50px;height:340.00px;background:#d3dae6"></div>
<div class="r" style="left:955.00px;top:110.00px;width:45.00px;height:835.00px;background:linear-gradient(90deg,rgba(40,50,70,0) 0%,rgba(40,50,70,0.025) 45%,rgba(40,50,70,0.05) 72%,rgba(40,50,70,0.09) 88%,rgba(40,50,70,0.13) 100%)"></div>
<div class="r" style="left:1000.00px;top:110.00px;width:999.00px;height:835.00px;background:#fff;border-top:1px solid #d3dae6"></div>
<div class="r" style="left:1963.40px;top:120.00px;width:26.60px;height:26.80px;background:#eef1f6;border-radius:4px"></div>
<svg class="r" style="left:1970.00px;top:127.00px;" width="13" height="13" viewBox="0 0 13 13"><path d="M1 1 L12 12 M12 1 L1 12" stroke="#343741" stroke-width="1.3"/></svg>
<div id="t130" class="t" style="left:1027.00px;top:139.51px;font-size:25.05px;color:#1a1c21;font-weight:700;">Expanded document</div>
<div id="t131" class="t" style="left:1026.70px;top:183.30px;font-size:16.3px;color:#343741;font-weight:700;">View:</div>
<svg class="r" style="left:1078.00px;top:184.80px;" width="14" height="14" viewBox="0 0 14 14"><g fill="none" stroke="#3a8fd8" stroke-width="1.05"><path d="M1.2 0.9 H8.6 L12.6 4.8 V13 H1.2 Z"/><path d="M4.4 8 H9.4 M4.4 10.2 H9.4"/></g><path d="M8.4 0.6 L12.9 5 H8.4 Z" fill="#0b77d0"/></svg>
<div id="t132" class="t" style="left:1101.00px;top:184.31px;font-size:16.7px;color:#0a6ec8;-webkit-text-stroke:0.3px currentColor">Single document</div>
<svg class="r" style="left:1239.30px;top:184.80px;" width="14" height="14" viewBox="0 0 14 14"><g fill="none" stroke="#3a8fd8" stroke-width="1.0"><path d="M1.2 0.9 H7.6 L10.8 4 V11.4 H1.2 Z"/><path d="M3.6 6.6 H8.2 M3.6 9 H8.2"/><path d="M3.2 13.1 H12.7 V5.6"/></g><path d="M7.4 0.6 L11 4.2 H7.4 Z" fill="#0b77d0"/></svg>
<div id="t133" class="t" style="left:1262.00px;top:184.31px;font-size:16.86px;color:#0a6ec8;-webkit-text-stroke:0.3px currentColor">Surrounding documents</div>
<svg class="r" style="left:1452.00px;top:185.00px;" width="15" height="15" viewBox="0 0 15 15"><g fill="none" stroke="#69707d" stroke-width="1.1"><circle cx="7.5" cy="7.5" r="6.6"/><path d="M5.3 5.8 C5.3 3.2 9.7 3.2 9.7 5.8 C9.7 7.4 7.5 7.5 7.5 9.3"/></g><circle cx="7.5" cy="11.3" r="0.8" fill="#69707d"/></svg>
<svg class="r" style="left:1784.00px;top:185.00px;" width="13" height="13" viewBox="0 0 13 13"><path d="M1.5 0.5 V12.5 M11.5 0.5 L5.5 6.5 L11.5 12.5" fill="none" stroke="#98a2b3" stroke-width="1.2"/></svg>
<svg class="r" style="left:1811.00px;top:185.00px;" width="11" height="13" viewBox="0 0 11 13"><path d="M9.5 0.5 L3.5 6.5 L9.5 12.5" fill="none" stroke="#98a2b3" stroke-width="1.2"/></svg>
<div id="t134" class="t" style="left:1838.50px;top:183.30px;font-size:16.5px;color:#0b6ec5;-webkit-text-stroke:0.45px currentColor">1</div>
<div id="t135" class="t" style="left:1855.50px;top:184.31px;font-size:16.6px;color:#343741;">of</div>
<div id="t136" class="t" style="left:1879.60px;top:184.31px;font-size:16.9px;color:#343741;-webkit-text-stroke:0.45px currentColor">500</div>
<svg class="r" style="left:1927.00px;top:185.00px;" width="10" height="13" viewBox="0 0 10 13"><path d="M1.5 0.5 L7.5 6.5 L1.5 12.5" fill="none" stroke="#343741" stroke-width="1.3"/></svg>
<svg class="r" style="left:1952.00px;top:185.00px;" width="13" height="13" viewBox="0 0 13 13"><path d="M1 0.5 L7 6.5 L1 12.5 M11.5 0.5 V12.5" fill="none" stroke="#343741" stroke-width="1.3"/></svg>
<div class="r" style="left:1000.00px;top:236.00px;width:999.00px;height:1.00px;background:#d3dae6"></div>
<div id="t137" class="t" style="left:1031.20px;top:274.31px;font-size:14.3px;color:#0b6ec5;font-weight:700;">Table</div>
<div id="t138" class="t" style="left:1089.00px;top:274.31px;font-size:14.3px;color:#1a1c21;font-weight:700;">JSON</div>
<div class="r" style="left:1026.00px;top:297.50px;width:928.00px;height:1.00px;background:#d3dae6"></div>
<div class="r" style="left:1026.00px;top:296.50px;width:45.00px;height:2.50px;background:#0b77d0"></div>
<div class="r" style="left:1026.00px;top:309.00px;width:928.00px;height:43.50px;background:#fbfcfd;border:1px solid #e3e8f0;border-radius:6px"></div>
<svg class="r" style="left:1039.20px;top:321.20px;" width="20" height="21" viewBox="0 0 20 21"><g fill="none" stroke="#3b3f48" stroke-width="1.2" stroke-linecap="round"><path d="M8.46 16.17 A7.6 7.6 0 1 1 13.62 13.49"/><path d="M12.9 14.3 L18 19.4"/></g></svg>
<div id="t139" class="t" style="left:1071.00px;top:322.60px;font-size:16.35px;color:#69707d;">Search field names</div>
<div id="t140" class="t" style="left:1035.70px;top:364.01px;font-size:14.0px;color:#25282f;font-weight:700;">Actions</div>
<div id="t141" class="t" style="left:1202.40px;top:364.01px;font-size:14.0px;color:#1a1c21;font-weight:700;">Field</div>
<div id="t142" class="t" style="left:1481.00px;top:364.01px;font-size:14.0px;color:#1a1c21;font-weight:700;">Value</div>
<div class="r" style="left:1026.00px;top:389.50px;width:928.00px;height:1.00px;background:#e3e8f0"></div>
<div class="r" style="left:1026.00px;top:428.50px;width:928.00px;height:1.00px;background:#e3e8f0"></div>
<div class="r" style="left:1026.00px;top:467.50px;width:928.00px;height:1.00px;background:#e3e8f0"></div>
<div class="r" style="left:1026.00px;top:506.50px;width:928.00px;height:1.00px;background:#e3e8f0"></div>
<div class="r" style="left:1026.00px;top:545.50px;width:928.00px;height:1.00px;background:#e3e8f0"></div>
<div class="r" style="left:1026.00px;top:604.50px;width:928.00px;height:1.00px;background:#e3e8f0"></div>
<div class="r" style="left:1026.00px;top:663.50px;width:928.00px;height:1.00px;background:#e3e8f0"></div>
<div class="r" style="left:1026.00px;top:702.50px;width:928.00px;height:1.00px;background:#e3e8f0"></div>
<div class="r" style="left:1026.00px;top:741.50px;width:928.00px;height:1.00px;background:#e3e8f0"></div>
<div class="r" style="left:1026.00px;top:780.50px;width:928.00px;height:1.00px;background:#e3e8f0"></div>
<div class="r" style="left:1026.00px;top:819.50px;width:928.00px;height:1.00px;background:#e3e8f0"></div>
<div class="r" style="left:1026.00px;top:858.50px;width:928.00px;height:1.00px;background:#e3e8f0"></div>
<div class="r" style="left:1026.00px;top:897.50px;width:928.00px;height:1.00px;background:#e3e8f0"></div>
<div class="r" style="left:1026.00px;top:936.50px;width:928.00px;height:1.00px;background:#e3e8f0"></div>
<div class="r" style="left:1198.00px;top:401.30px;width:18.00px;height:18.00px;background:#ececee;border:1px solid #dcdde1;border-radius:50%"></div>
<svg class="r" style="left:1201.30px;top:404.60px;" width="11" height="11" viewBox="0 0 11 11"><circle cx="5.5" cy="5.5" r="4.7" fill="none" stroke="#6e747d" stroke-width="0.9"/><path d="M4 4.3 C4 2.5 7.1 2.5 7.1 4.3 C7.1 5.4 5.5 5.4 5.5 6.8" fill="none" stroke="#6e747d" stroke-width="0.9"/><circle cx="5.5" cy="8.3" r="0.6" fill="#6e747d"/></svg>
<div id="t143" class="t m" style="left:1220.90px;top:404.51px;font-size:13.33px;color:#343741;">_id</div>
<div id="t144" class="t m" style="left:1481.00px;top:404.51px;font-size:13.33px;color:#1a1c21;">d96ea52e55</div>
<div class="r" style="left:1198.00px;top:440.30px;width:18.00px;height:18.00px;background:#ececee;border:1px solid #dcdde1;border-radius:50%"></div>
<svg class="r" style="left:1201.30px;top:443.60px;" width="11" height="11" viewBox="0 0 11 11"><circle cx="5.5" cy="5.5" r="4.7" fill="none" stroke="#6e747d" stroke-width="0.9"/><path d="M4 4.3 C4 2.5 7.1 2.5 7.1 4.3 C7.1 5.4 5.5 5.4 5.5 6.8" fill="none" stroke="#6e747d" stroke-width="0.9"/><circle cx="5.5" cy="8.3" r="0.6" fill="#6e747d"/></svg>
<div id="t145" class="t m" style="left:1220.90px;top:443.51px;font-size:13.33px;color:#343741;">_index</div>
<div id="t146" class="t m" style="left:1481.00px;top:443.51px;font-size:13.33px;color:#1a1c21;">.ds-logs-aws.vpcflow-default-2023.03.20-000003</div>
<div class="r" style="left:1198.00px;top:479.30px;width:18.00px;height:18.00px;background:#edf5f7;border:1px solid #cfe5df;border-radius:3px"></div>
<div id="t147" class="t" style="left:1202.00px;top:482.51px;font-size:12px;color:#2f7a68;font-weight:700;font-style:italic">#</div>
<div id="t148" class="t m" style="left:1220.90px;top:482.51px;font-size:13.33px;color:#343741;">_score</div>
<div id="t149" class="t m" style="left:1481.00px;top:482.51px;font-size:13.33px;color:#1a1c21;">&nbsp;-</div>
<div class="r" style="left:1198.00px;top:518.30px;width:18.00px;height:18.00px;background:#fbf6ea;border:1px solid #efe5cb;border-radius:3px"></div>
<svg class="r" style="left:1201.30px;top:521.10px;" width="11" height="12" viewBox="0 0 11 12"><g fill="none" stroke="#6a6f78" stroke-width="0.95"><rect x="0.5" y="1.5" width="10" height="10" rx="0.5"/><path d="M0.5 4.2 H10.5 M3 0 V2.5 M8 0 V2.5 M3.2 6.5 V10 M5.5 6.5 V10 M7.8 6.5 V10"/></g></svg>
<div id="t150" class="t m" style="left:1220.90px;top:521.51px;font-size:13.33px;color:#343741;">@timestamp</div>
<div id="t151" class="t m" style="left:1481.00px;top:521.51px;font-size:13.33px;color:#1a1c21;">Mar 20, 2023 @ 15:21:22.000</div>
<div class="r" style="left:1198.00px;top:557.30px;width:18.00px;height:18.00px;background:#eaf2f9;border:1px solid #cddcec;border-radius:3px"></div>
<div id="t152" class="t" style="left:1203.30px;top:561.51px;font-size:11.5px;color:#3f6a91;font-weight:700;font-style:italic">k</div>
<div id="t153" class="t m" style="left:1220.90px;top:560.51px;font-size:13.33px;color:#343741;">aws.firehose.arn</div>
<div id="t154" class="t m" style="left:1481.00px;top:560.51px;font-size:13.33px;color:#1a1c21;">arn:aws:firehose:us-east-2:</div>
<div class="r" style="left:1198.00px;top:616.30px;width:18.00px;height:18.00px;background:#eaf2f9;border:1px solid #cddcec;border-radius:3px"></div>
<div id="t155" class="t" style="left:1203.30px;top:620.51px;font-size:11.5px;color:#3f6a91;font-weight:700;font-style:italic">k</div>
<div id="t156" class="t m" style="left:1220.90px;top:619.51px;font-size:13.33px;color:#343741;">aws.firehose.parameters.es_dat</div>
<div id="t157" class="t m" style="left:1481.00px;top:619.51px;font-size:13.33px;color:#1a1c21;">logs-aws.vpcflow-default</div>
<div class="r" style="left:1198.00px;top:675.30px;width:18.00px;height:18.00px;background:#eaf2f9;border:1px solid #cddcec;border-radius:3px"></div>
<div id="t158" class="t" style="left:1203.30px;top:679.51px;font-size:11.5px;color:#3f6a91;font-weight:700;font-style:italic">k</div>
<div id="t159" class="t m" style="left:1220.90px;top:678.51px;font-size:13.33px;color:#343741;">aws.firehose.request_id</div>
<div id="t160" class="t m" style="left:1481.00px;top:678.51px;font-size:13.33px;color:#1a1c21;">7c433937-9954-4a09-bd07-5df069f1dd49</div>
<div class="r" style="left:1198.00px;top:714.30px;width:18.00px;height:18.00px;background:#eaf2f9;border:1px solid #cddcec;border-radius:3px"></div>
<div id="t161" class="t" style="left:1203.30px;top:718.51px;font-size:11.5px;color:#3f6a91;font-weight:700;font-style:italic">k</div>
<div id="t162" class="t m" style="left:1220.90px;top:717.51px;font-size:13.33px;color:#343741;">aws.kinesis.name</div>
<div id="t163" class="t m" style="left:1481.00px;top:717.51px;font-size:13.33px;color:#1a1c21;">Elastic-VPCFlow</div>
<div class="r" style="left:1198.00px;top:753.30px;width:18.00px;height:18.00px;background:#eaf2f9;border:1px solid #cddcec;border-radius:3px"></div>
<div id="t164" class="t" style="left:1203.30px;top:757.51px;font-size:11.5px;color:#3f6a91;font-weight:700;font-style:italic">k</div>
<div id="t165" class="t m" style="left:1220.90px;top:756.51px;font-size:13.33px;color:#343741;">aws.kinesis.type</div>
<div id="t166" class="t m" style="left:1481.00px;top:756.51px;font-size:13.33px;color:#1a1c21;">deliverystream</div>
<div class="r" style="left:1198.00px;top:792.30px;width:18.00px;height:18.00px;background:#eaf2f9;border:1px solid #cddcec;border-radius:3px"></div>
<div id="t167" class="t" style="left:1203.30px;top:796.51px;font-size:11.5px;color:#3f6a91;font-weight:700;font-style:italic">k</div>
<div id="t168" class="t m" style="left:1220.90px;top:795.51px;font-size:13.33px;color:#343741;">aws.vpcflow.account_id</div>
<div class="r" style="left:1198.00px;top:831.30px;width:18.00px;height:18.00px;background:#eaf2f9;border:1px solid #cddcec;border-radius:3px"></div>
<div id="t169" class="t" style="left:1203.30px;top:835.51px;font-size:11.5px;color:#3f6a91;font-weight:700;font-style:italic">k</div>
<div id="t170" class="t m" style="left:1220.90px;top:834.51px;font-size:13.33px;color:#343741;">aws.vpcflow.interface_id</div>
<div id="t171" class="t m" style="left:1481.00px;top:834.51px;font-size:13.33px;color:#1a1c21;">eni-088d176934</div>
<div class="r" style="left:1198.00px;top:870.30px;width:18.00px;height:18.00px;background:#eaf2f9;border:1px solid #cddcec;border-radius:3px"></div>
<div id="t172" class="t" style="left:1203.30px;top:874.51px;font-size:11.5px;color:#3f6a91;font-weight:700;font-style:italic">k</div>
<div id="t173" class="t m" style="left:1220.90px;top:873.51px;font-size:13.33px;color:#343741;">aws.vpcflow.log_status</div>
<div id="t174" class="t m" style="left:1481.00px;top:873.51px;font-size:13.33px;color:#1a1c21;">NODATA</div>
<div class="r" style="left:1198.00px;top:909.30px;width:18.00px;height:18.00px;background:#eaf2f9;border:1px solid #cddcec;border-radius:3px"></div>
<div id="t175" class="t" style="left:1203.30px;top:913.51px;font-size:11.5px;color:#3f6a91;font-weight:700;font-style:italic">k</div>
<div id="t176" class="t m" style="left:1220.90px;top:912.51px;font-size:13.33px;color:#343741;">aws.vpcflow.version</div>
<div id="t177" class="t m" style="left:1481.00px;top:912.51px;font-size:13.33px;color:#1a1c21;">2</div>
<div id="t178" class="t m" style="left:1798.40px;top:560.51px;font-size:13.33px;color:#1a1c21;">:deliverystream/El</div>
<div id="t179" class="t m" style="left:1481.00px;top:580.51px;font-size:13.33px;color:#1a1c21;">astic-VPCFlow</div>
<div id="t180" class="t m" style="left:1220.90px;top:639.51px;font-size:13.33px;color:#343741;">astream_name</div>
<div class="r" style="left:1988.00px;top:245.00px;width:4.50px;height:542.00px;background:#b0b5bd;border-radius:3px"></div>
</body></html>
